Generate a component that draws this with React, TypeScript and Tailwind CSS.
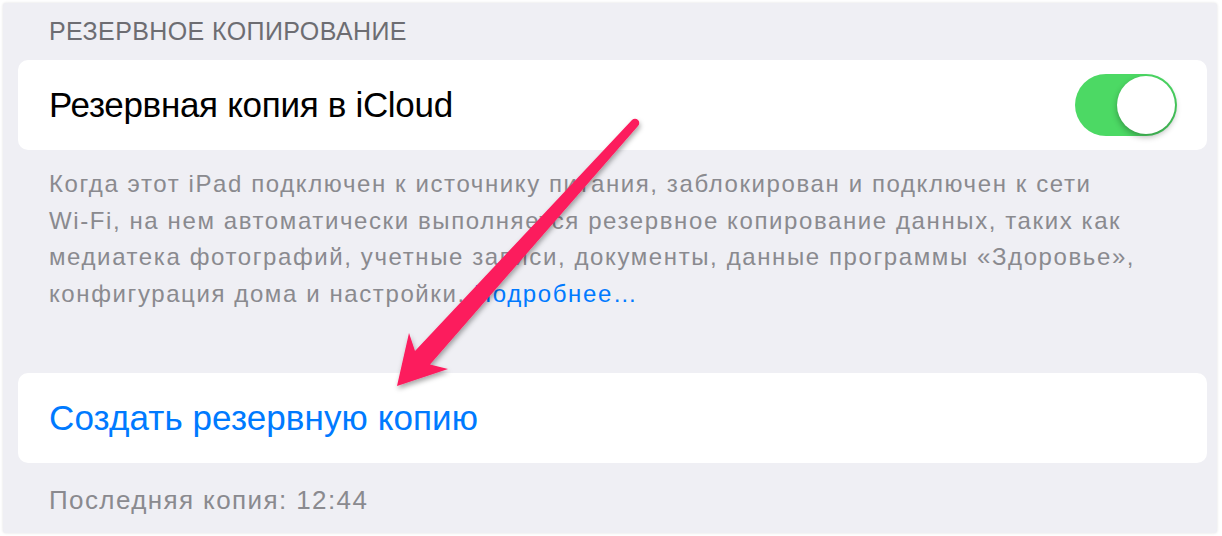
import React from "react";

const font = { fontFamily: '"Liberation Sans", Arial, sans-serif' };

const Toggle = () => (
    <div className="flex h-[62px] w-[102px] items-center justify-end rounded-full bg-[#4cd964] p-[2px]">
        <div className="h-[58px] w-[58px] rounded-full bg-white shadow-[0_3px_6px_rgba(0,0,0,0.3)]" />
    </div>
);

const Arrow = () => (
    <svg className="pointer-events-none absolute left-0 top-0" width="1222" height="536" viewBox="0 0 1222 536">
        <defs>
            <filter id="arrowShadow" x="-20%" y="-20%" width="140%" height="140%">
                <feDropShadow dx="1" dy="3" stdDeviation="2.5" floodColor="#000" floodOpacity="0.35" />
            </filter>
        </defs>
        <path
            d="M397 386 L409 333 L415 351 L632 120 A4 4 0 0 1 638 126 L430 364.5 L448 369 Z"
            fill="#fc1b5d"
            filter="url(#arrowShadow)"
        />
    </svg>
);

export default function App() {
    return (
        <div className="relative h-[536px] w-[1222px] bg-white p-[3px] pr-[5px]" style={font}>
            <div className="h-full w-full rounded-[3px] bg-[#efeff4] pl-[15px] pr-[10px] pt-[16px] shadow-[0_0_3px_rgba(0,0,0,0.12)]">
                <h2 className="pl-[31px] text-[25px] leading-[25px] tracking-[0.4px] text-[#6d6d72]">РЕЗЕРВНОЕ КОПИРОВАНИЕ</h2>

                <div className="mt-[16px] flex h-[90px] items-center justify-between rounded-[10px] bg-white pl-[31px] pr-[30px]">
                    <span className="text-[35px] tracking-[-0.3px] text-black">Резервная копия в iCloud</span>
                    <Toggle />
                </div>

                <p className="mt-[16px] whitespace-nowrap pl-[31px] text-[24px] leading-[36.5px] tracking-[1.6px] text-[#8a8a8f]">
                    Когда этот iPad подключен к источнику питания, заблокирован и подключен к сети<br />
                    Wi-Fi, на нем автоматически выполняется резервное копирование данных, таких как<br />
                    медиатека фотографий, учетные записи, документы, данные программы «Здоровье»,<br />
                    конфигурация дома и настройки. <span className="text-[#007aff]">Подробнее…</span>
                </p>

                <div className="mt-[61px] flex h-[90px] items-center rounded-[10px] bg-white pl-[31px]">
                    <span className="text-[35px] tracking-[0.1px] text-[#007aff]">Создать резервную копию</span>
                </div>

                <p className="mt-[22px] pl-[31px] text-[26px] leading-[30px] tracking-[1.4px] text-[#8a8a8f]">
                    Последняя копия: 12:44
                </p>
            </div>
            <Arrow />
        </div>
    );
}
